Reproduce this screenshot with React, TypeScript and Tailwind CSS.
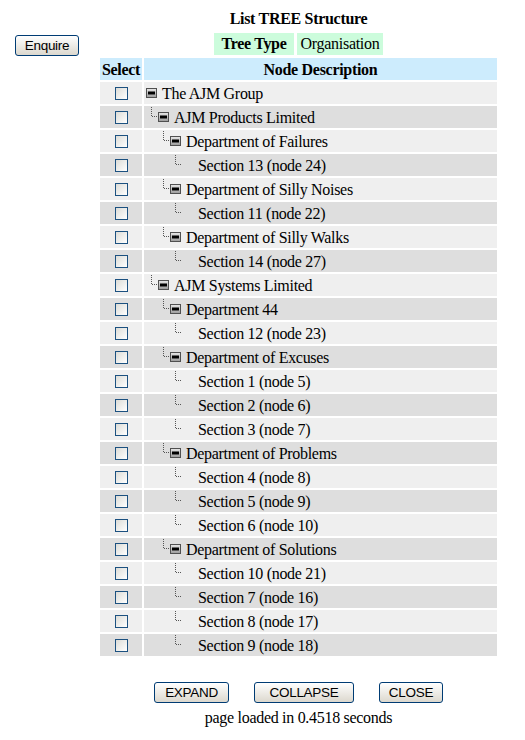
import { useState } from "react";

type Node = { level: number; label: string };

const nodes: Node[] = [
  { level: 0, label: "The AJM Group" },
  { level: 1, label: "AJM Products Limited" },
  { level: 2, label: "Department of Failures" },
  { level: 3, label: "Section 13 (node 24)" },
  { level: 2, label: "Department of Silly Noises" },
  { level: 3, label: "Section 11 (node 22)" },
  { level: 2, label: "Department of Silly Walks" },
  { level: 3, label: "Section 14 (node 27)" },
  { level: 1, label: "AJM Systems Limited" },
  { level: 2, label: "Department 44" },
  { level: 3, label: "Section 12 (node 23)" },
  { level: 2, label: "Department of Excuses" },
  { level: 3, label: "Section 1 (node 5)" },
  { level: 3, label: "Section 2 (node 6)" },
  { level: 3, label: "Section 3 (node 7)" },
  { level: 2, label: "Department of Problems" },
  { level: 3, label: "Section 4 (node 8)" },
  { level: 3, label: "Section 5 (node 9)" },
  { level: 3, label: "Section 6 (node 10)" },
  { level: 2, label: "Department of Solutions" },
  { level: 3, label: "Section 10 (node 21)" },
  { level: 3, label: "Section 7 (node 16)" },
  { level: 3, label: "Section 8 (node 17)" },
  { level: 3, label: "Section 9 (node 18)" },
];

function MinusBox() {
  return (
    <svg width="12" height="10" viewBox="0 0 12 10" className="shrink-0">
      <defs>
        <linearGradient id="mb" x1="0" y1="0" x2="0" y2="1">
          <stop offset="0" stopColor="#e8e8e8" />
          <stop offset="1" stopColor="#9a9a9a" />
        </linearGradient>
      </defs>
      <rect x="0.5" y="0.5" width="10" height="9" fill="url(#mb)" stroke="#505050" />
      <rect x="2" y="3.5" width="7" height="3" fill="#000" />
    </svg>
  );
}

function Join() {
  return (
    <svg width="12" height="22" viewBox="0 0 12 22" className="shrink-0">
      <line x1="5.5" y1="1" x2="5.5" y2="11" stroke="#555" strokeDasharray="1 1" />
      <line x1="6" y1="10.5" x2="12" y2="10.5" stroke="#555" strokeDasharray="1 1" />
    </svg>
  );
}

function Check() {
  const [on, setOn] = useState(false);
  return (
    <button
      type="button"
      onClick={() => setOn((v) => !v)}
      aria-label="Select"
      className="flex h-[13px] w-[13px] items-center justify-center border border-[#1c5180] bg-linear-to-br from-[#dcdcd7] to-white"
    >
      {on && <span className="block h-[7px] w-[7px] bg-[#21a121]" />}
    </button>
  );
}

function XpButton({ label, className = "" }: { label: string; className?: string }) {
  return (
    <button
      type="button"
      className={`h-[21px] rounded-[3px] border border-[#003c74] bg-linear-to-b from-white to-[#dcd8ce] font-['Liberation_Sans',Arial,sans-serif] text-[13.5px] leading-[19px] text-black ${className}`}
    >
      {label}
    </button>
  );
}

export default function App() {
  return (
    <div className="flex min-h-[740px] w-[525px] bg-white font-['Liberation_Serif','Times_New_Roman',serif] text-[16px] tracking-[-0.3px] text-black">
      <div className="w-[72px] shrink-0 pl-[15px] pt-[33px]">
        <XpButton label="Enquire" className="w-[64px]" />
      </div>

      <div className="flex flex-1 flex-col items-center">
        <h1 className="mt-[9px] h-[19px] font-bold leading-[19px]">List TREE Structure</h1>

        <div className="mt-[5px] flex gap-[3px]">
          <div className="flex h-[22px] w-[80px] items-center justify-center bg-[#ccfcdc] font-bold leading-[22px]">
            Tree Type
          </div>
          <div className="flex h-[22px] w-[86px] items-center justify-center bg-[#ccfcdc] leading-[22px]">
            Organisation
          </div>
        </div>

        <div className="mt-[3px] grid w-[397px] grid-cols-[42px_353px] gap-[2px] leading-[23px]">
          <div className="h-[22px] bg-[#cdecfd] text-center font-bold">Select</div>
          <div className="h-[22px] bg-[#cdecfd] text-center font-bold">Node Description</div>

          {nodes.map((n, i) => {
            const bg = i % 2 === 0 ? "bg-[#efefef]" : "bg-[#dedede]";
            return (
              <div key={i} className="contents">
                <div className={`flex h-[22px] items-center justify-center ${bg}`}>
                  <Check />
                </div>
                <div className={`flex h-[22px] items-center pl-[2px] ${bg}`}>
                  {n.level >= 2 && <span className="w-[12px] shrink-0" />}
                  {n.level >= 3 && <span className="w-[12px] shrink-0" />}
                  {n.level >= 1 && <Join />}
                  {n.level < 3 ? <MinusBox /> : <span className="w-[12px] shrink-0" />}
                  <span className="ml-[4px] whitespace-nowrap">{n.label}</span>
                </div>
              </div>
            );
          })}
        </div>

        <div className="mt-[26px] flex gap-[25px]">
          <XpButton label="EXPAND" className="w-[75px]" />
          <XpButton label="COLLAPSE" className="w-[100px]" />
          <XpButton label="CLOSE" className="w-[64px]" />
        </div>

        <p className="mt-[5px] leading-[19px]">page loaded in 0.4518 seconds</p>
      </div>
    </div>
  );
}
